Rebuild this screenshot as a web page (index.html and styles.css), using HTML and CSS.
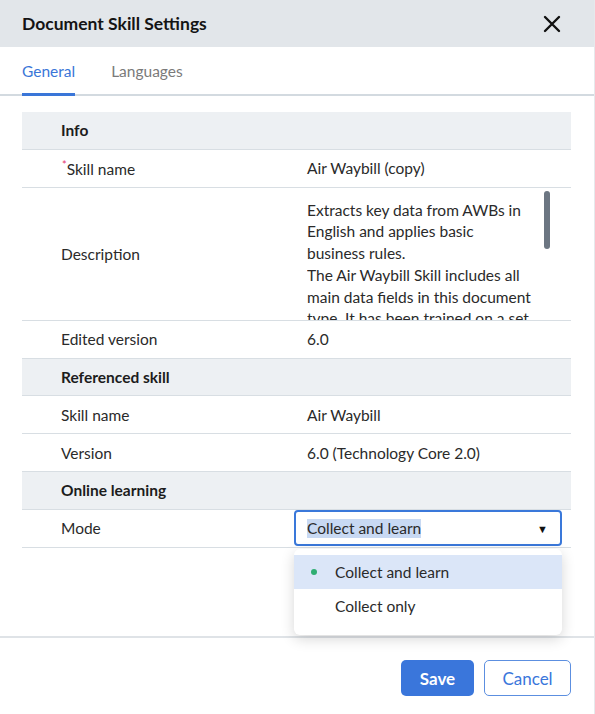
FILE: index.html
```html
<!DOCTYPE html>
<html lang="en">
<head>
    <meta charset="UTF-8">
    <meta name="viewport" content="width=device-width, initial-scale=1.0">
    <title>Document Skill Settings</title>
    <link rel="stylesheet" href="styles.css">
</head>
<body>
    <div class="dialog">
        <div class="dialog-header">
            <h1 class="dialog-title">Document Skill Settings</h1>
            <button class="close-btn" aria-label="Close">
                <svg width="18" height="18" viewBox="0 0 18 18">
                    <path d="M2 2 L16 16 M16 2 L2 16" stroke="#111" stroke-width="2.4" stroke-linecap="round"/>
                </svg>
            </button>
        </div>

        <div class="tabs">
            <div class="tab active">General</div>
            <div class="tab">Languages</div>
        </div>

        <div class="dialog-body">
            <div class="props">
                <div class="row section">
                    <div class="cell-label">Info</div>
                </div>
                <div class="row">
                    <div class="cell-label"><span class="required">*</span>Skill name</div>
                    <div class="cell-value">Air Waybill (copy)</div>
                </div>
                <div class="row row-tall">
                    <div class="cell-label">Description</div>
                    <div class="cell-value scroll-text">
                        Extracts key data from AWBs in English and applies basic business rules.<br>
                        The Air Waybill Skill includes all main data fields in this document type. It has been trained on a set of sample documents and can be retrained on your own.
                    </div>
                    <div class="scroll-thumb"></div>
                </div>
                <div class="row">
                    <div class="cell-label">Edited version</div>
                    <div class="cell-value">6.0</div>
                </div>
                <div class="row section">
                    <div class="cell-label">Referenced skill</div>
                </div>
                <div class="row">
                    <div class="cell-label">Skill name</div>
                    <div class="cell-value">Air Waybill</div>
                </div>
                <div class="row">
                    <div class="cell-label">Version</div>
                    <div class="cell-value">6.0 (Technology Core 2.0)</div>
                </div>
                <div class="row section">
                    <div class="cell-label">Online learning</div>
                </div>
                <div class="row">
                    <div class="cell-label">Mode</div>
                    <div class="select-wrap">
                        <div class="select">
                            <span class="select-text">Collect and learn</span>
                            <span class="select-arrow">&#9660;</span>
                        </div>
                        <div class="select-menu">
                            <div class="option selected"><span class="dot"></span>Collect and learn</div>
                            <div class="option">Collect only</div>
                        </div>
                    </div>
                </div>
            </div>
        </div>

        <div class="dialog-footer">
            <button class="btn btn-primary">Save</button>
            <button class="btn btn-outline">Cancel</button>
        </div>
    </div>
</body>
</html>
```

FILE: styles.css
```css
* {
    box-sizing: border-box;
}
body {
    margin: 0;
    font-family: Lato, 'Liberation Sans', Arial, sans-serif;
    font-size: 15.5px;
    color: #2a2a2a;
    background-color: #fff;
}
.dialog {
    width: 595px;
    height: 714px;
    display: flex;
    flex-direction: column;
    border-right: 1px solid #e6e9ec;
    background-color: #fff;
}
.dialog-header {
    height: 47px;
    flex-shrink: 0;
    display: flex;
    align-items: center;
    justify-content: space-between;
    padding: 0 33px 0 22px;
    background-color: #e2e6ea;
}
.dialog-title {
    margin: 0;
    font-size: 17.5px;
    font-weight: bold;
    color: #141414;
}
.close-btn {
    border: none;
    background: none;
    padding: 0;
    width: 18px;
    height: 18px;
    display: flex;
}
.tabs {
    height: 49px;
    flex-shrink: 0;
    display: flex;
    align-items: stretch;
    gap: 36px;
    padding: 0 22px;
    border-bottom: 2px solid #d3dae0;
}
.tab {
    display: flex;
    align-items: center;
    padding-top: 2px;
    color: #7a7a7a;
    margin-bottom: -2px;
    border-bottom: 3px solid transparent;
}
.tab.active {
    color: #3a76d8;
    border-bottom-color: #3a76d8;
}
.dialog-body {
    flex: 1;
    padding: 16px 23px 0 22px;
}
.row {
    position: relative;
    display: grid;
    grid-template-columns: 285px 1fr;
    align-items: center;
    height: 37.85px;
    border-bottom: 1px solid #d8dee3;
}
.row.section {
    background-color: #edf0f3;
    font-weight: bold;
    color: #1c1c1c;
}
.row-tall {
    height: 133px;
}
.cell-label {
    padding-left: 39px;
}
.required {
    color: #e4336b;
    font-size: 11px;
    vertical-align: 6px;
    margin-left: 1px;
}
.scroll-text {
    align-self: stretch;
    overflow: hidden;
    padding: 12px 37px 0 0;
    line-height: 21.7px;
}
.scroll-thumb {
    position: absolute;
    right: 21px;
    top: 3px;
    width: 6px;
    height: 58px;
    border-radius: 3px;
    background-color: #6c7682;
}
.select-wrap {
    position: relative;
    margin-left: -13px;
    margin-right: 9px;
}
.select {
    height: 36px;
    display: flex;
    align-items: center;
    justify-content: space-between;
    padding: 0 12px 0 11px;
    border: 2px solid #3a78da;
    border-radius: 4px;
    background-color: #fff;
}
.select-text {
    background-color: #c8d9f3;
    line-height: 19px;
}
.select-arrow {
    font-size: 11px;
    color: #111;
}
.select-menu {
    position: absolute;
    top: 39px;
    left: 0;
    right: 0;
    padding: 6px 0 12px;
    background-color: #fff;
    border-radius: 6px;
    box-shadow: 0 4px 14px rgba(0, 0, 0, 0.16);
    font-weight: normal;
}
.option {
    position: relative;
    height: 34px;
    display: flex;
    align-items: center;
    padding-left: 41px;
}
.option.selected {
    background-color: #dbe6f8;
}
.dot {
    position: absolute;
    left: 17px;
    top: 14px;
    width: 6px;
    height: 6px;
    border-radius: 50%;
    background-color: #2fae72;
}
.dialog-footer {
    height: 78px;
    flex-shrink: 0;
    display: flex;
    justify-content: flex-end;
    align-items: flex-start;
    gap: 10px;
    padding: 22px 23px 0 0;
    border-top: 2px solid #dfe3e7;
}
.btn {
    height: 36px;
    border-radius: 5px;
    font-family: inherit;
    font-size: 17px;
    cursor: pointer;
}
.btn-primary {
    width: 73px;
    border: none;
    background-color: #3a76db;
    color: #fff;
    font-weight: bold;
}
.btn-outline {
    width: 87px;
    border: 1.5px solid #5c8fe0;
    background-color: #fff;
    color: #3a76db;
}
```
